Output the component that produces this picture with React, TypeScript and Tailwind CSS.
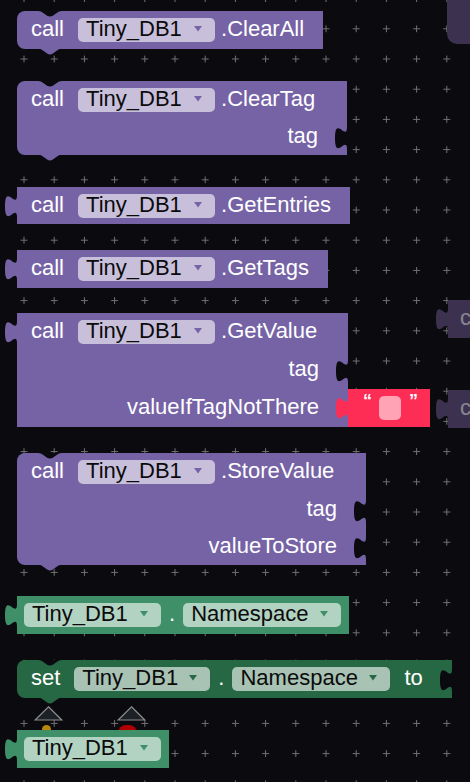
import React from "react";

const BG = "#0a0a0f";
const PURPLE = "#7663a6";
const GREEN = "#3f9068";
const DKGREEN = "#276844";
const RED = "#fe2d55";
const STUB = "#3c3250";

const TAB = "M13,0 c0,15 -12,-12 -12,11.25 s12,-3.75 12,11.25 L14,22.5 L14,0 Z";

function OutTab({ color }: { color: string }) {
  return (
    <svg className="absolute left-[-13px] top-[8px]" width="14" height="23" viewBox="0 0 14 23">
      <path d={TAB} fill={color} />
    </svg>
  );
}

function InNotch() {
  return (
    <svg className="absolute right-[-1px] top-[9px]" width="14" height="23" viewBox="0 0 14 23">
      <path d={TAB} fill={BG} />
    </svg>
  );
}

function TopNotch() {
  return (
    <svg className="absolute left-[21px] top-[-0.5px]" width="24" height="6" viewBox="0 0 24 6">
      <path d="M0,0 C5,0 8,5.5 12,5.5 C16,5.5 19,0 24,0 Z" fill={BG} />
    </svg>
  );
}

function BottomTab({ color }: { color: string }) {
  return (
    <svg className="absolute bottom-[-6px] left-[21px]" width="24" height="7" viewBox="0 0 24 7">
      <path d="M0,0.5 C5,0.5 8,6.5 12,6.5 C16,6.5 19,0.5 24,0.5 L24,0 L0,0 Z" fill={color} />
    </svg>
  );
}

function Arrow({ color }: { color: string }) {
  return (
    <svg width="8" height="6" viewBox="0 0 8 6" className="shrink-0">
      <polygon points="0,0 8,0 4,5.5" fill={color} />
    </svg>
  );
}

function Dropdown({ label, w, arrow, className = "" }: { label: string; w: string; arrow: string; className?: string }) {
  return (
    <div
      className={`flex h-[24px] shrink-0 items-center justify-between rounded-[5px] bg-white/60 pb-[2px] pl-[8px] pr-[13px] text-[#0b0b0b] ${w} ${className}`}
    >
      <span className="leading-[22px]">{label}</span>
      <Arrow color={arrow} />
    </div>
  );
}

function Label({ children, className = "" }: { children: React.ReactNode; className?: string }) {
  return <span className={`pb-[2px] leading-[22px] ${className}`}>{children}</span>;
}

function CallRow({ method, h = "h-[38px]" }: { method: string; h?: string }) {
  return (
    <div className={`flex items-center pl-[14px] ${h}`}>
      <Label>call</Label>
      <Dropdown label="Tiny_DB1" w="w-[137px]" arrow={PURPLE} className="ml-[14px]" />
      <Label className="ml-[6px]">{method}</Label>
    </div>
  );
}

function InputRow({ label, h = "h-[38px]", notch = true }: { label: string; h?: string; notch?: boolean }) {
  return (
    <div className={`relative flex items-center justify-end pr-[29px] ${h}`}>
      <Label>{label}</Label>
      {notch && <InNotch />}
    </div>
  );
}

function Block({
  color,
  statement = false,
  className = "",
  children,
}: {
  color: string;
  statement?: boolean;
  className?: string;
  children: React.ReactNode;
}) {
  return (
    <div
      className={`relative shrink-0 self-start ${statement ? "rounded-l-[8px]" : ""} ${className}`}
      style={{ backgroundColor: color }}
    >
      {statement ? (
        <>
          <TopNotch />
          <BottomTab color={color} />
        </>
      ) : (
        <OutTab color={color} />
      )}
      {children}
    </div>
  );
}

function Stub() {
  return (
    <div className="relative flex h-[38px] w-[30px] items-center pl-[12px] text-[#8a8794]" style={{ backgroundColor: STUB }}>
      <OutTab color={STUB} />
      <Label>c</Label>
    </div>
  );
}

function Warning({ dot }: { dot: string }) {
  return (
    <div className="flex flex-col items-start">
      <svg width="29" height="15" viewBox="0 0 29 15">
        <polygon points="14.5,0.8 27.8,14 1.2,14" fill="#1b2125" stroke="#8b8b8b" strokeWidth="1.2" />
      </svg>
      <div className={`mt-[4px] rounded-full ${dot}`} />
    </div>
  );
}

export default function App() {
  return (
    <div
      className="relative h-[782px] w-[470px] overflow-hidden text-[22px] text-white"
      style={{ backgroundColor: BG, fontFamily: '"Liberation Sans", Arial, sans-serif' }}
    >
      {/* workspace grid */}
      <svg className="absolute inset-0" width="470" height="782">
        <defs>
          <pattern id="grid" width="30.2" height="30.2" patternUnits="userSpaceOnUse" x="8.9" y="43.9">
            <path d="M11.6 15.1h7M15.1 11.6v7" stroke="#727272" strokeWidth="1" />
          </pattern>
        </defs>
        <rect width="470" height="782" fill="url(#grid)" />
      </svg>

      {/* blocks at the right edge of the canvas */}
      <div className="absolute left-[447px] top-0 h-[44px] w-[30px] rounded-bl-[10px]" style={{ backgroundColor: STUB }} />
      <div className="absolute left-[448px] top-[300px] flex flex-col gap-[52px]">
        <Stub />
        <Stub />
      </div>

      {/* warning indicators behind the component block */}
      <div className="absolute left-[34px] top-[706px] flex items-start gap-[54px]">
        <Warning dot="ml-[8px] h-[12px] w-[9px] bg-[#b8860b]" />
        <Warning dot="ml-[1px] h-[16px] w-[19px] bg-[#b00000]" />
      </div>

      {/* main column of blocks */}
      <div className="relative flex flex-col gap-[26px] pl-[17px] pt-[11px]">
        <Block color={PURPLE} statement className="w-[306px]">
          <CallRow method=".ClearAll" />
        </Block>

        <Block color={PURPLE} statement className="mt-[6px] w-[330px]">
          <CallRow method=".ClearTag" h="h-[37px]" />
          <InputRow label="tag" h="h-[37px]" />
        </Block>

        <Block color={PURPLE} className="mt-[6px] w-[333px]">
          <CallRow method=".GetEntries" h="h-[37px]" />
        </Block>

        <Block color={PURPLE} className="w-[311px]">
          <CallRow method=".GetTags" />
        </Block>

        <div className="mt-[-1px] flex items-end">
          <Block color={PURPLE} className="w-[331px]">
            <CallRow method=".GetValue" />
            <InputRow label="tag" />
            <InputRow label="valueIfTagNotThere" notch={false} />
          </Block>
          <div className="relative flex h-[38px] w-[82px] items-center pl-[15px]" style={{ backgroundColor: RED }}>
            <OutTab color={RED} />
            <span className="mt-[-14px] text-[18px] font-bold leading-none">“</span>
            <div className="ml-[7px] h-[24px] w-[22px] rounded-[5px] bg-[#ffa3b5]" />
            <span className="ml-[8px] mt-[-14px] text-[18px] font-bold leading-none">”</span>
          </div>
        </div>

        <Block color={PURPLE} statement className="w-[349px]">
          <CallRow method=".StoreValue" />
          <InputRow label="tag" h="h-[37px]" />
          <InputRow label="valueToStore" h="h-[37px]" />
        </Block>

        <Block color={GREEN} className="mt-[5px] flex h-[38px] w-[332px] items-center pl-[7px]">
          <Dropdown label="Tiny_DB1" w="w-[137px]" arrow={GREEN} />
          <Label className="mx-[8px]">.</Label>
          <Dropdown label="Namespace" w="w-[158px]" arrow={GREEN} />
        </Block>

        <Block color={DKGREEN} statement className="flex h-[38px] w-[435px] items-center pl-[14px]">
          <Label>set</Label>
          <Dropdown label="Tiny_DB1" w="w-[136px]" arrow={DKGREEN} className="ml-[14px]" />
          <Label className="mx-[8px]">.</Label>
          <Dropdown label="Namespace" w="w-[158px]" arrow={DKGREEN} />
          <Label className="ml-[14px]">to</Label>
          <InNotch />
        </Block>

        <Block color={GREEN} className="mt-[6px] flex h-[38px] w-[152px] items-center pl-[7px]">
          <Dropdown label="Tiny_DB1" w="w-[137px]" arrow={GREEN} />
        </Block>
      </div>
    </div>
  );
}
